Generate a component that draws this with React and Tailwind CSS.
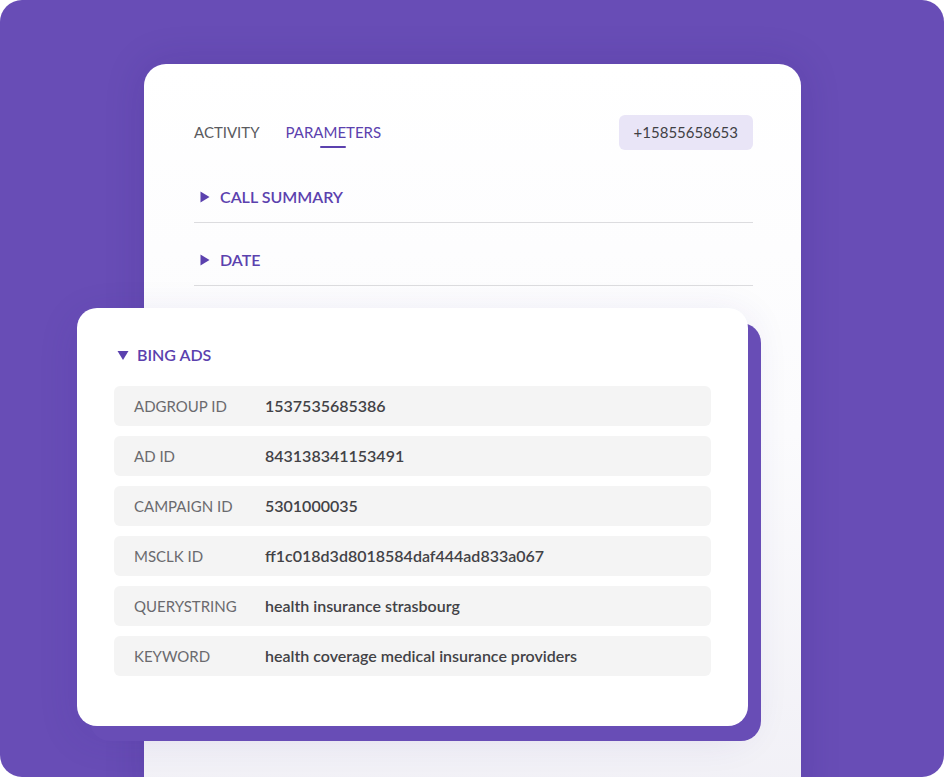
const fields = [
  { label: "ADGROUP ID", value: "1537535685386" },
  { label: "AD ID", value: "843138341153491" },
  { label: "CAMPAIGN ID", value: "5301000035" },
  { label: "MSCLK ID", value: "ff1c018d3d8018584daf444ad833a067" },
  { label: "QUERYSTRING", value: "health insurance strasbourg" },
  { label: "KEYWORD", value: "health coverage medical insurance providers" },
];

function Caret({ down }) {
  return (
    <svg width="12" height="12" viewBox="0 0 12 12" className="shrink-0">
      {down ? (
        <path d="M0.5 2 L11.5 2 L6 11 Z" fill="#5b41ae" />
      ) : (
        <path d="M1.5 0.5 L10.5 6 L1.5 11.5 Z" fill="#5b41ae" />
      )}
    </svg>
  );
}

function Section({ title }) {
  return (
    <div className="flex items-center gap-[9px] pt-[26px] pb-[14px] border-b border-[#dcdcdf] pl-[5px]">
      <Caret />
      <span className="text-[16px] leading-[22px] font-semibold text-[#5b41ae]">{title}</span>
    </div>
  );
}

export default function App() {
  return (
    <div className="w-[944px] h-[777px] bg-white" style={{ fontFamily: "Lato, 'Open Sans', sans-serif" }}>
      <div className="w-full h-full rounded-[22px] bg-[#684db6] overflow-hidden pt-[64px] pl-[144px]">
        {/* call details card */}
        <div className="w-[657px] h-[740px] rounded-t-[22px] bg-gradient-to-b from-white via-[#fbfbfd] to-[#f1f0f6] pl-[50px] pr-[48px] pt-[51px] shadow-[0_0_40px_rgba(40,20,110,0.15)]">
          <div className="flex items-center h-[35px]">
            <div className="flex items-center gap-[26px] text-[15px]">
              <span className="text-[#5a5a5e]">ACTIVITY</span>
              <div className="relative text-[#5b41ae]">
                PARAMETERS
                <div className="absolute left-1/2 -translate-x-1/2 top-[25px] w-[26px] h-[2px] rounded bg-[#5b41ae]" />
              </div>
            </div>
            <div className="ml-auto h-[35px] rounded-[6px] bg-[#e9e5f7] px-[15px] flex items-center text-[15px] text-[#3f3f44]">
              +15855658653
            </div>
          </div>

          <div className="mt-[10px]">
            <Section title="CALL SUMMARY" />
            <Section title="DATE" />
          </div>

          {/* expanded parameter group */}
          <div className="mt-[22px] -ml-[117px] w-[671px] h-[418px] rounded-[20px] bg-white px-[37px] pt-[36px] shadow-[13px_15px_0_#684db6,0_10px_40px_rgba(60,40,150,0.12)]">
            <div className="flex items-center gap-[8px] pl-[3px]">
              <Caret down />
              <span className="text-[16px] leading-[22px] font-semibold text-[#5b41ae]">BING ADS</span>
            </div>
            <div className="mt-[20px] flex flex-col gap-[10px]">
              {fields.map((f) => (
                <div key={f.label} className="h-[40px] rounded-[6px] bg-[#f4f4f4] flex items-center pl-[20px]">
                  <span className="w-[131px] shrink-0 text-[15px] text-[#6a6a6e]">{f.label}</span>
                  <span className="text-[16px] font-semibold text-[#424246]">{f.value}</span>
                </div>
              ))}
            </div>
          </div>
        </div>
      </div>
    </div>
  );
}
